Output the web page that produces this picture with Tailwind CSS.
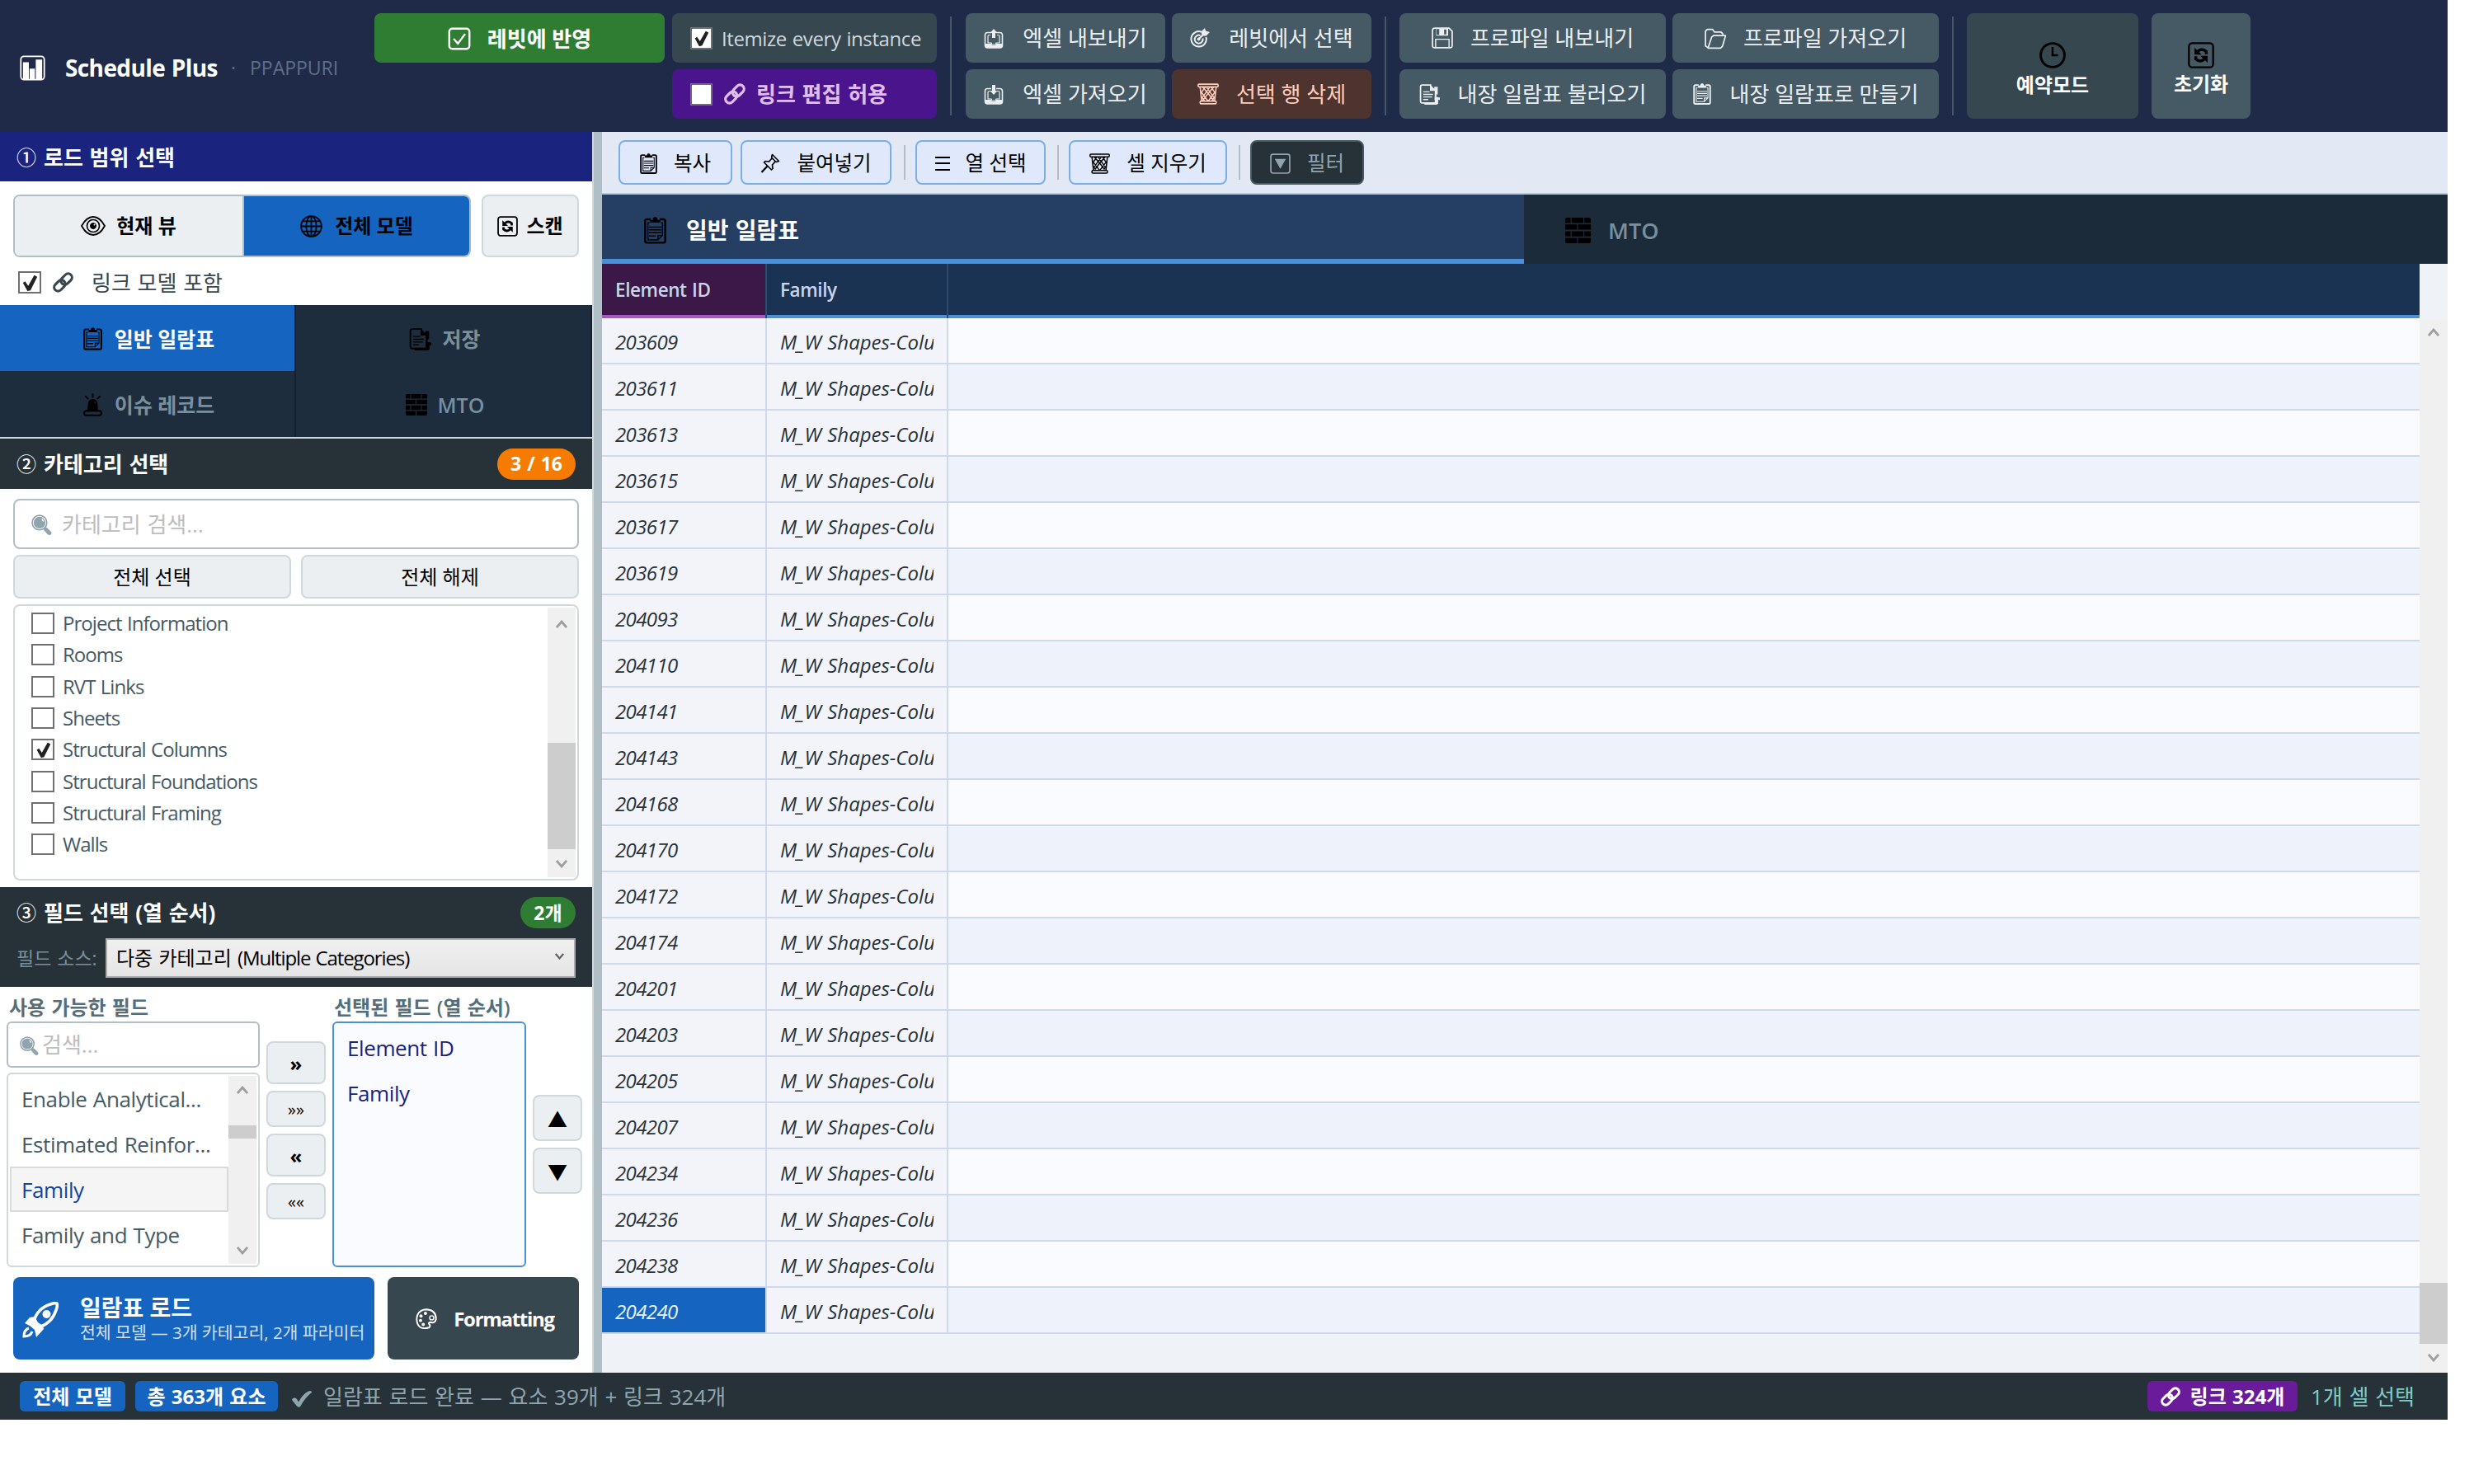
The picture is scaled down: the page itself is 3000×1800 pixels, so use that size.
<!DOCTYPE html>
<html lang="ko">
<head>
  <meta charset="UTF-8" />
  <meta name="viewport" content="width=device-width, initial-scale=1.0" />
  <title>Schedule Plus</title>
  <script src="https://cdn.jsdelivr.net/npm/@tailwindcss/browser@4"></script>
</head>
<body class="bg-white font-['Open_Sans','Noto_Sans_CJK_KR',sans-serif] text-[26px] leading-none [word-spacing:1px] text-black whitespace-nowrap">

  <!-- Icons -->
  <svg class="hidden">
    <symbol id="i-chart" viewBox="0 0 24 24"><rect x="1" y="1" width="22" height="22" rx="3" fill="none" stroke="currentColor" stroke-width="1.4"/><path fill="currentColor" d="M3 6.500h5.500V23H3zM9.200 12.500h5V23h-5zM15 4h6v19h-6z"/></symbol>
    <symbol id="i-done" viewBox="0 0 24 24" fill="none" stroke="currentColor" stroke-width="2"><rect x="1.500" y="1.500" width="21" height="21" rx="3"/><path d="M6 12l4.500 5L18 7"/></symbol>
    <symbol id="i-outbox" viewBox="0 0 24 24"><path fill="none" stroke="currentColor" stroke-width="1.600" d="M9 4.500H4.500Q1.500 4.500 1.500 7.500V20q0 3 3 3h15q3 0 3-3V7.500q0-3-3-3H15"/><path fill="none" stroke="currentColor" stroke-width="1.200" d="M8 7.500H6.500Q5 7.500 5 9v8h4l1 2h4l1-2h4V9q0-1.500-1.500-1.500H16"/><path fill="currentColor" d="M2 18h7l1 2h4l1-2h7v5H2zM12 0l4.500 5H14v6h-4V5H7.500z"/></symbol>
    <symbol id="i-inbox" viewBox="0 0 24 24"><path fill="none" stroke="currentColor" stroke-width="1.600" d="M9 4.500H4.500Q1.500 4.500 1.500 7.500V20q0 3 3 3h15q3 0 3-3V7.500q0-3-3-3H15"/><path fill="none" stroke="currentColor" stroke-width="1.200" d="M8 7.500H6.500Q5 7.500 5 9v8h4l1 2h4l1-2h4V9q0-1.500-1.500-1.500H16"/><path fill="currentColor" d="M2 18h7l1 2h4l1-2h7v5H2zM12 12l4.500-5H14V0h-4v7H7.500z"/></symbol>
    <symbol id="i-target" viewBox="0 0 24 24" fill="none" stroke="currentColor"><path stroke-width="2" d="M14 4.800A9.200 9.200 0 1 0 19.500 11"/><path stroke-width="2" d="M12.500 9A5 5 0 1 0 15.500 12.500"/><circle cx="10.500" cy="13.500" r="1.500" fill="currentColor"/><path stroke-width="2.200" d="M10.500 13.500L18 6"/><path fill="currentColor" stroke="none" d="M14 7V4l4-4 1 3.500L24 5l-4.500 4.500h-4z"/></symbol>
    <symbol id="i-trash" viewBox="0 0 24 24" fill="none" stroke="currentColor"><rect x=".8" y="1" width="22.400" height="3" rx="1" stroke-width="1.500"/><path stroke-width="1.500" d="M3 4l1.800 16M21 4l-1.800 16"/><rect x="3" y="20" width="18" height="3" rx="1" stroke-width="1.500"/><path stroke-width="1.400" d="M5.500 4l7 8 6 8M10 4l8.500 12M15 4l5 7M4 9.500L12 20M4.500 15l3.500 5M18.500 4l-7 8-6 8M14 4L5.500 16M9 4l-5 7M20 9.500L12 20M19.500 15L16 20"/></symbol>
    <symbol id="i-save" viewBox="0 0 24 24"><path fill="none" stroke="currentColor" stroke-width="1.600" d="M3.500 1h16L23 4.500v16q0 2.500-2.500 2.500h-17Q1 23 1 20.500v-17Q1 1 3.500 1z"/><path fill="none" stroke="currentColor" stroke-width="1.300" d="M4.500 23V13.500h15V23"/><path fill="currentColor" fill-rule="evenodd" d="M5 1h13.500v8.500H5zM14 2.500v5.500h2.500V2.500zM5.500 2v6.500h3V2z"/></symbol>
    <symbol id="i-folder" viewBox="0 0 24 24" fill="none" stroke="currentColor" stroke-width="1.600" stroke-linejoin="round"><path d="M4 22L1 20V3.500L3 1.500h6l2 3h7.500l2 2V8"/><path d="M4 22L8 10l2-1.500h13.500L20 20.500 18 22.500H4z"/></symbol>
    <symbol id="i-doc" viewBox="0 0 24 24"><path fill="none" stroke="currentColor" stroke-width="1.700" d="M14 1H3.500Q1.500 1 1.500 3V20q0 2 2 2h15"/><path fill="currentColor" d="M12.500 0l5 5.500V3h4v9h-1.500v3H22v8l-2 1H6v-2.500h12V8h-5.500z"/><path stroke="currentColor" stroke-width="1.300" d="M4.500 9H12M4.500 12H16M4.500 15H15M4.500 18h6"/><path stroke="currentColor" stroke-width="2.800" d="M18 17h6"/></symbol>
    <symbol id="i-clip" viewBox="0 0 20 24"><path fill="none" stroke="currentColor" stroke-width="1.800" d="M6 2H2.500Q1 2 1 3.500v18Q1 23 2.500 23h15q1.500 0 1.500-1.500v-18Q19 2 17.500 2H14"/><path fill="none" stroke="currentColor" stroke-width="1" d="M5 5H3.500v15.500h9l4-4V5H15M12.500 20.500v-4h4"/><path fill="currentColor" d="M5.500 5V2.500h2.300Q8 0 10 0t2.200 2.500h2.300V5z"/><path stroke="currentColor" stroke-width="1.100" d="M4.500 9h11M4.500 11.500h11M4.500 14h11M4.500 17h6"/></symbol>
    <symbol id="i-clock" viewBox="0 0 24 24" fill="none" stroke="currentColor"><circle cx="12" cy="12" r="10.800" stroke-width="2.200"/><path stroke-width="1.800" d="M12 4.500V13M11 12h6"/></symbol>
    <symbol id="i-sync" viewBox="0 0 24 24"><rect x="1" y="1" width="22" height="22" rx="3" fill="none" stroke="currentColor" stroke-width="1.700"/><path fill="none" stroke="currentColor" stroke-width="2.600" d="M9 8.500Q12.500 5 16.800 8.500V11M15 15.500Q11.500 19 7.200 15.500V13"/><path fill="currentColor" d="M6 5v6.500h6.500zM18 19v-6.500h-6.500z"/></symbol>
    <symbol id="i-eye" viewBox="0 0 30 24" fill="none" stroke="currentColor"><path stroke-width="1.800" d="M1 12Q7 1 15 1t14 11q-6 11-14 11T1 12z"/><circle cx="15" cy="12" r="7.500" stroke-width="1.700"/><circle cx="15" cy="12" r="3.500" fill="currentColor"/><circle cx="16.500" cy="10.500" r="1" fill="#eceff1" stroke="none"/></symbol>
    <symbol id="i-globe" viewBox="0 0 24 24" fill="none" stroke="currentColor" stroke-width="1.600"><circle cx="12" cy="12" r="11"/><ellipse cx="12" cy="12" rx="5.500" ry="11"/><path d="M12 1v22M1 12h22M3 6.500h18M3 17.500h18"/></symbol>
    <symbol id="i-link" viewBox="0 0 24 24" fill="none" stroke="currentColor" stroke-width="3"><rect x="8.700" y="3.800" width="14.500" height="9" rx="4.500" transform="rotate(-45 15.900 8.300)"/><rect x=".8" y="11.200" width="14.500" height="9" rx="4.500" transform="rotate(-45 8.100 15.700)"/></symbol>
    <symbol id="i-siren" viewBox="0 0 20 24"><path fill="currentColor" d="M4.500 17L5 11q.5-5 5-5t5 5l.5 6 3 1.500h-17z"/><rect x="1" y="18.500" width="18" height="4.600" rx="2" fill="none" stroke="currentColor" stroke-width="1.700"/><path stroke="currentColor" stroke-width="1.600" d="M10 0v4.500M2 2.500l3.500 3.500M18 2.500L14.500 6"/><path stroke="#1e2d3e" stroke-width="1" d="M12 8.500l1 2"/></symbol>
    <symbol id="i-brick" viewBox="0 0 24 24" fill="currentColor"><path d="M0 2q0-2 2-2h3v5H0zM6 0h11v5H6zM18 0h4q2 0 2 2v3h-6zM0 6.300h11v5H0zM12 6.300h12v5H12zM0 12.700h5v5H0zM6 12.700h11v5H6zM18 12.700h6v5h-6zM0 19h11v5H2q-2 0-2-2zM12 19h12v3q0 2-2 2H12z"/></symbol>
    <symbol id="i-search" viewBox="0 0 24 24"><circle cx="9.500" cy="9.500" r="8.500" fill="none" stroke="currentColor" stroke-width="1.600"/><circle cx="9.500" cy="9.500" r="6.800" fill="currentColor"/><path stroke="#fff" stroke-width="1.400" d="M12.500 5l1.500 3"/><path stroke="currentColor" stroke-width="4.800" stroke-linecap="round" d="M17 17.500l4 4"/></symbol>
    <symbol id="i-rocket" viewBox="0 0 44 44"><path fill="none" stroke="currentColor" stroke-width="3.600" stroke-linejoin="round" d="M14 24Q18 8 34 3q5-2 8-1 1 3-1 8-5 16-21 21z"/><circle cx="29.500" cy="15" r="5" fill="currentColor"/><path fill="currentColor" d="M15 18l4 7 6 4 1 4-9 10-2-9-6-5-6-3 6-7z"/><path fill="none" stroke="currentColor" stroke-width="3" d="M8 32q-6 2-6 10 8 0 10-6"/></symbol>
    <symbol id="i-palette" viewBox="0 0 24 24"><path fill="none" stroke="currentColor" stroke-width="1.800" d="M15 21.500Q2 25 1.200 12.500 1.500 1.500 12.500 1.200 23 2 22.800 12q-.8 5-6.500 3.500-3 .5-.5 3 .8 1.500-.8 3z"/><g fill="currentColor"><circle cx="11" cy="5.500" r="1.800"/><circle cx="6" cy="8.500" r="1.800"/><circle cx="5.500" cy="13.500" r="1.800"/><circle cx="8.500" cy="18" r="1.800"/></g><circle cx="18" cy="10.500" r="2.300" fill="none" stroke="currentColor" stroke-width="1.300"/></symbol>
    <symbol id="i-heavy" viewBox="0 0 24 20"><path fill="currentColor" d="M0 11q0-2 2.500-2.500T6 10l2 3.500Q13 4 20 .5q4-1.500 4 1.500Q16 8 10.500 18.500q-2 2.500-4.500 0Q3 15 0 11z"/></symbol>
    <symbol id="i-pin" viewBox="0 0 24 24" fill="none" stroke="currentColor" stroke-width="1.700" stroke-linejoin="round"><path d="M14.500 1.500l8 8-2.500.8-2-.3-3.500 4 .5 4.500-1.500 1.500L4.500 11 6 9.500l4.500.5 3.500-4-.3-2zM14.500 6l4 4"/><path stroke-width="2.200" d="M9 15l-7.500 8"/></symbol>
    <symbol id="i-lines" viewBox="0 0 18 24" stroke="currentColor" stroke-width="2"><path d="M0 5h18M0 12h18M0 20h18"/></symbol>
    <symbol id="i-filter" viewBox="0 0 24 24"><rect x="1" y="1" width="22" height="22" rx="2.500" fill="none" stroke="currentColor" stroke-width="1.600"/><path fill="currentColor" d="M5.500 6.500h13L12 18z"/></symbol>
    <symbol id="i-up" viewBox="0 0 14 10" fill="none" stroke="currentColor" stroke-width="2.800"><path d="M1 9l6-7 6 7"/></symbol>
    <symbol id="i-down" viewBox="0 0 14 10" fill="none" stroke="currentColor" stroke-width="2.800"><path d="M1 1l6 7 6-7"/></symbol>
    <symbol id="i-tick" viewBox="0 0 24 24"><path fill="#212121" d="M3 12l3-2 4 6L18 2l4 2-9 18-4 1z"/></symbol>
  </svg>

  <div class="flex h-[1722px] w-[2968px] flex-col">

    <!-- Header -->
    <header class="flex h-[160px] items-start bg-[#1f2a48] pt-4 text-[#eceff1]">
      <div class="flex h-[132px] w-[454px] items-center pl-6 text-white">
        <svg class="size-[31px]"><use href="#i-chart"/></svg>
        <span class="ml-6 text-[28px] font-bold tracking-[-0.6px]">Schedule Plus</span>
        <span class="ml-4 text-[23px] text-[#5f6f88]">·</span>
        <span class="ml-[17px] text-[23px] text-[#5f6f88]">PPAPPURI</span>
      </div>
      <button class="flex h-[60px] w-[352px] items-center justify-center gap-5 rounded-lg bg-[#2e7d32] pt-0.5 font-bold text-white">
        <svg class="size-7"><use href="#i-done"/></svg>레빗에 반영
      </button>
      <div class="ml-[9px] flex w-[321px] flex-col gap-2">
        <label class="flex h-[60px] items-center rounded-lg bg-[#37474f] pl-[22px]">
          <span class="flex size-[27px] items-center justify-center border-2 border-[#707070] bg-white"><svg class="size-[21px]"><use href="#i-tick"/></svg></span>
          <span class="ml-[11px] pt-0.5 text-[24px] tracking-[-0.4px] text-[#cfd8dc]">Itemize every instance</span>
        </label>
        <label class="flex h-[60px] items-center rounded-lg bg-[#4a148c] pl-[22px] font-bold text-[#e1bee7]">
          <span class="size-[27px] border-2 border-[#707070] bg-white"></span>
          <svg class="ml-[14px] size-[26px]"><use href="#i-link"/></svg>
          <span class="ml-[13px]">링크 편집 허용</span>
        </label>
      </div>
      <div class="mt-1 ml-4 h-[120px] w-0.5 bg-[#455a64]"></div>
      <div class="ml-[17px] grid grid-cols-[242px_242px] gap-2">
        <button class="flex h-[60px] items-center justify-center gap-[23px] rounded-lg bg-[#455a64]"><svg class="mt-0.5 size-6"><use href="#i-outbox"/></svg>엑셀 내보내기</button>
        <button class="flex h-[60px] items-center justify-center gap-[23px] rounded-lg bg-[#455a64]"><svg class="size-6"><use href="#i-target"/></svg>레빗에서 선택</button>
        <button class="flex h-[60px] items-center justify-center gap-[23px] rounded-lg bg-[#455a64]"><svg class="mt-0.5 size-6"><use href="#i-inbox"/></svg>엑셀 가져오기</button>
        <button class="flex h-[60px] items-center justify-center gap-[21px] rounded-lg bg-[#4e342e] text-[#ffccbc]"><svg class="size-[26px]"><use href="#i-trash"/></svg>선택 행 삭제</button>
      </div>
      <div class="mt-1 ml-4 h-[120px] w-0.5 bg-[#455a64]"></div>
      <div class="ml-4 grid grid-cols-[323px_323px] gap-2">
        <button class="flex h-[60px] items-center justify-center gap-[21px] rounded-lg bg-[#455a64]"><svg class="size-[26px]"><use href="#i-save"/></svg>프로파일 내보내기</button>
        <button class="flex h-[60px] items-center justify-center gap-[21px] rounded-lg bg-[#455a64]"><svg class="mt-0.5 size-[26px]"><use href="#i-folder"/></svg>프로파일 가져오기</button>
        <button class="flex h-[60px] items-center justify-center gap-[22px] rounded-lg bg-[#455a64]"><svg class="size-[25px]"><use href="#i-doc"/></svg>내장 일람표 불러오기</button>
        <button class="flex h-[60px] items-center justify-center gap-[23px] rounded-lg bg-[#455a64]"><svg class="h-[26px] w-[22px]"><use href="#i-clip"/></svg>내장 일람표로 만들기</button>
      </div>
      <div class="mt-1 ml-4 h-[120px] w-0.5 bg-[#455a64]"></div>
      <button class="ml-4 flex h-[128px] w-[208px] flex-col items-center rounded-lg bg-[#37474f] pt-[35px] text-[24px] font-bold text-white">
        <svg class="size-8 text-black"><use href="#i-clock"/></svg><span class="mt-2">예약모드</span>
      </button>
      <button class="ml-4 flex h-[128px] w-[120px] flex-col items-center rounded-lg bg-[#455a64] pt-[35px] text-[24px] font-semibold text-white">
        <svg class="size-8 text-black"><use href="#i-sync"/></svg><span class="mt-[7px]">초기화</span>
      </button>
    </header>

    <main class="flex h-[1505px]">
      <!-- Sidebar -->
      <aside class="flex w-[718px] flex-col">
        <div class="flex h-[60px] items-center gap-[9px] bg-[#1a237e] pt-0.5 pl-5 font-bold text-white"><span class="text-[24px] font-medium">①</span>로드 범위 선택</div>
        <div class="h-[150px] pt-4">
          <div class="flex pl-4 text-[24px] font-bold">
            <div class="flex h-[76px] w-[555px] overflow-hidden rounded-lg border-2 border-[#b0bec5]">
              <button class="flex w-[278px] items-center justify-center gap-[13px] border-r-2 border-[#b0bec5] bg-[#eceff1]"><svg class="h-6 w-[30px]"><use href="#i-eye"/></svg>현재 뷰</button>
              <button class="flex flex-1 items-center justify-center gap-[15px] bg-[#1565c0]"><svg class="size-[27px]"><use href="#i-globe"/></svg>전체 모델</button>
            </div>
            <button class="ml-[13px] flex h-[76px] w-[118px] items-center justify-center gap-2.5 rounded-lg border-2 border-[#cfd8dc] bg-[#eceff1]"><svg class="size-[25px]"><use href="#i-sync"/></svg>스캔</button>
          </div>
          <label class="mt-[17px] flex items-center pl-[22px] text-[#37474f]">
            <span class="flex h-[27px] w-[28px] items-center justify-center border-2 border-[#707070]"><svg class="size-[22px]"><use href="#i-tick"/></svg></span>
            <svg class="ml-3.5 size-[25px]"><use href="#i-link"/></svg>
            <span class="ml-[22px]">링크 모델 포함</span>
          </label>
        </div>
        <div class="grid h-[160px] grid-cols-2 grid-rows-2 bg-[#1e2d3e] text-[25px] font-semibold text-[#78909c]">
          <button class="flex items-center justify-center gap-[15px] border-r-2 border-[#14202e] bg-[#1565c0] pt-0.5 pl-1 text-white"><svg class="h-7 w-[23px] text-black"><use href="#i-clip"/></svg>일반 일람표</button>
          <button class="flex items-center justify-center gap-[13px] border-r-2 border-[#14202e] pt-0.5 pl-1"><svg class="size-[27px] text-black"><use href="#i-doc"/></svg>저장</button>
          <button class="flex items-center justify-center gap-[15px] border-r-2 border-[#14202e] pt-0.5 pl-1"><svg class="h-7 w-[23px] text-black"><use href="#i-siren"/></svg>이슈 레코드</button>
          <button class="flex items-center justify-center gap-[13px] border-r-2 border-[#14202e] pt-0.5 pl-1"><svg class="size-[26px] text-black"><use href="#i-brick"/></svg>MTO</button>
        </div>

        <!-- Categories -->
        <div class="flex h-[63px] items-center gap-[9px] border-t-2 border-[#cfd8dc] bg-[#263238] pr-5 pl-5 font-bold text-white">
          <span class="text-[24px] font-medium">②</span>카테고리 선택
          <span class="ml-auto flex h-[38px] w-[95px] items-center justify-center rounded-full bg-[#f57c00] text-[23px]">3 / 16</span>
        </div>
        <div class="flex h-[483px] flex-col px-4 pt-3">
          <div class="flex h-[61px] items-center gap-3 rounded-lg border-2 border-[#b0bec5] pl-5 text-[#bdbdbd]"><svg class="mt-0.5 size-[25px] text-[#90a4ae]"><use href="#i-search"/></svg>카테고리 검색...</div>
          <div class="mt-[7px] grid grid-cols-2 gap-3 text-[24px]">
            <button class="h-[53px] rounded-lg border-2 border-[#cfd8dc] bg-[#eceff1]">전체 선택</button>
            <button class="h-[53px] rounded-lg border-2 border-[#cfd8dc] bg-[#eceff1]">전체 해제</button>
          </div>
          <div class="mt-[7px] flex h-[335px] justify-between rounded-lg border-2 border-[#cfd8dc] py-0.5 pr-0.5 pl-5">
            <div id="categories" class="flex flex-col text-[24px] tracking-[-0.95px] text-[#455a64]"></div>
            <div class="flex w-[34px] flex-col items-center bg-[#f0f0f0] pt-[15px] text-[#9e9e9e]">
              <svg class="h-[10px] w-3.5"><use href="#i-up"/></svg>
              <div class="mt-[139px] h-[129px] w-full bg-[#cdcdcd]"></div>
              <svg class="mt-[13px] h-[10px] w-3.5"><use href="#i-down"/></svg>
            </div>
          </div>
        </div>

        <!-- Fields -->
        <div class="h-[121px] bg-[#263238] pt-[12px] pr-5 pl-5 text-white">
          <div class="flex h-[38px] items-center gap-[9px] font-bold">
            <span class="text-[24px] font-medium">③</span>필드 선택 (열 순서)
            <span class="ml-auto flex h-[38px] w-[67px] items-center justify-center rounded-full bg-[#2e7d32] text-[23px]">2개</span>
          </div>
          <div class="mt-3 flex items-center text-[24px]">
            <span class="w-[108px] text-[23px] text-[#78909c]">필드 소스:</span>
            <div class="flex h-12 flex-1 items-center justify-between border-2 border-[#acacac] bg-linear-to-b from-[#f0f0f0] to-[#e5e5e5] pr-3 pl-[11px] text-black">
              <span>다중 카테고리 <span class="tracking-[-1.1px]">(Multiple Categories)</span></span>
              <svg class="mb-1 h-2 w-[11px] text-[#606060]"><use href="#i-down"/></svg>
            </div>
          </div>
        </div>
        <div class="flex h-[343px] pt-[13px] pl-2">
          <div class="flex w-[307px] flex-col">
            <span class="h-[29px] pl-[3px] text-[24px] font-semibold text-[#546e7a]">사용 가능한 필드</span>
            <div class="flex h-14 items-center gap-1 rounded-md border-2 border-[#b0bec5] pl-3.5 text-[#bdbdbd]"><svg class="mt-0.5 size-[23px] text-[#90a4ae]"><use href="#i-search"/></svg>검색...</div>
            <div class="mt-1.5 flex h-[236px] rounded-md border-2 border-[#cfd8dc] p-0.5 text-[26px] tracking-[-0.4px] text-[#455a64]">
              <div class="flex w-[265px] flex-col">
                <div class="flex h-[55px] items-center pt-px pl-3.5">Enable Analytical...</div>
                <div class="flex h-[55px] items-center pl-3.5">Estimated Reinfor...</div>
                <div class="flex h-[55px] items-center border-2 border-[#dadada] bg-[#f5f5f5] pl-3 text-[#0d47a1]">Family</div>
                <div class="flex h-[55px] items-center pl-3.5">Family and Type</div>
              </div>
              <div class="flex flex-1 flex-col items-center bg-[#f0f0f0] pt-3 text-[#9e9e9e]">
                <svg class="h-[10px] w-3.5"><use href="#i-up"/></svg>
                <div class="mt-[38px] h-4 w-full bg-[#cdcdcd]"></div>
                <svg class="mt-[131px] h-[10px] w-3.5"><use href="#i-down"/></svg>
              </div>
            </div>
          </div>
          <div class="ml-2 flex w-[72px] flex-col gap-2 pt-[53px]">
            <button class="h-[52px] rounded-lg border-2 border-[#cfd8dc] bg-[#eceff1] pt-0.5 text-[24px] font-bold">»</button>
            <button class="h-[44px] rounded-lg border-2 border-[#cfd8dc] bg-[#eceff1] pt-0.5 text-[20px]">»»</button>
            <button class="h-[52px] rounded-lg border-2 border-[#cfd8dc] bg-[#eceff1] pt-0.5 text-[24px] font-bold">«</button>
            <button class="h-[44px] rounded-lg border-2 border-[#cfd8dc] bg-[#eceff1] pt-0.5 text-[20px]">««</button>
          </div>
          <div class="ml-2 flex w-[235px] flex-col">
            <span class="h-[29px] pl-0.5 text-[24px] font-semibold text-[#546e7a]">선택된 필드 (열 순서)</span>
            <div class="h-[298px] rounded-md border-2 border-[#4a90d9] bg-[#fafbff] pt-0.5 pl-4 tracking-[-0.4px] text-[#1a237e]">
              <div class="flex h-[55px] items-center">Element ID</div>
              <div class="flex h-[55px] items-center">Family</div>
            </div>
          </div>
          <div class="ml-2 flex w-[60px] flex-col gap-2 pt-[118px] text-[24px]">
            <button class="h-14 rounded-lg border-2 border-[#cfd8dc] bg-[#eceff1] pt-1">▲</button>
            <button class="h-14 rounded-lg border-2 border-[#cfd8dc] bg-[#eceff1] pt-1">▼</button>
          </div>
        </div>
        <div class="flex gap-4 px-4 pt-[9px] text-white">
          <button class="flex h-[100px] w-[438px] items-center rounded-lg bg-[#1565c0] pl-[11px] text-left">
            <svg class="mt-1 size-11"><use href="#i-rocket"/></svg>
            <span class="ml-[26px]">
              <span class="block text-[28px] font-bold">일람표 로드</span>
              <span class="mt-1.5 block text-[20.5px] text-[#d0e0f2]">전체 모델 — 3개 카테고리, 2개 파라미터</span>
            </span>
          </button>
          <button class="flex h-[100px] flex-1 items-center justify-center gap-5 rounded-lg bg-[#37474f] pt-0.5 pl-1 text-[24px] font-bold tracking-[-1.3px]"><svg class="size-[26px]"><use href="#i-palette"/></svg>Formatting</button>
        </div>
      </aside>
      <div class="w-3 border-l-2 border-[#cfd8dc] bg-[#b0bec5]"></div>

      <!-- Grid -->
      <section class="flex w-[2238px] flex-col bg-[#eff3f8]">
        <div class="flex h-[76px] items-center border-b-2 border-[#bcc8d8] bg-[#e3e9f4] pl-5 text-[24.5px]">
          <button class="flex h-[54px] w-[138px] items-center justify-center gap-5 rounded-lg border-2 border-[#7aaee8] bg-[#dfe9fb] pt-0.5"><svg class="h-[25px] w-[21px]"><use href="#i-clip"/></svg>복사</button>
          <button class="ml-[10px] flex h-[54px] w-[183px] items-center justify-center gap-5 rounded-lg border-2 border-[#7aaee8] bg-[#dfe9fb] pt-0.5"><svg class="size-6"><use href="#i-pin"/></svg>붙여넣기</button>
          <div class="ml-[15px] h-[42px] w-0.5 bg-[#b0bec5]"></div>
          <button class="ml-3 flex h-[54px] w-[158px] items-center justify-center gap-[19px] rounded-lg border-2 border-[#7aaee8] bg-[#dfe9fb] pt-0.5"><svg class="h-6 w-[18px]"><use href="#i-lines"/></svg>열 선택</button>
          <div class="ml-[14px] h-[42px] w-0.5 bg-[#b0bec5]"></div>
          <button class="ml-3 flex h-[54px] w-[192px] items-center justify-center gap-5 rounded-lg border-2 border-[#7aaee8] bg-[#dfe9fb] pt-0.5"><svg class="size-[25px]"><use href="#i-trash"/></svg>셀 지우기</button>
          <div class="ml-[14px] h-[42px] w-0.5 bg-[#b0bec5]"></div>
          <button class="ml-3 flex h-[54px] w-[138px] items-center justify-center gap-[20px] rounded-lg border-2 border-[#455a64] bg-[#263238] pt-0.5 text-[#90a4ae]"><svg class="size-[25px]"><use href="#i-filter"/></svg>필터</button>
        </div>
        <div class="flex h-[84px] bg-[#1b2b3a] font-bold">
          <div class="flex w-[1118px] items-center gap-6 border-b-6 border-[#4a90d9] bg-[#253f63] pt-2 pl-[51px] text-[28px] text-white"><svg class="h-[33px] w-[27px] text-black"><use href="#i-clip"/></svg>일반 일람표</div>
          <div class="flex items-center gap-[21px] pt-0.5 pl-[50px] text-[27px] font-semibold text-[#78909c]"><svg class="size-[31px] text-black"><use href="#i-brick"/></svg>MTO</div>
        </div>
        <div class="flex flex-1">
          <div class="w-[2204px]">
            <div class="flex h-[66px] text-[22.5px] font-semibold tracking-[-0.4px] text-[#c5d5ee]">
              <div class="flex w-[198px] items-center border-b-4 border-[#a855c8] bg-[#3c1848] pt-0.5 pl-4">Element ID</div>
              <div class="w-0.5 bg-[#2c4a72]"></div>
              <div class="flex w-[218px] items-center border-b-4 border-[#4a90d9] bg-[#1b3352] pt-0.5 pl-4">Family</div>
              <div class="w-0.5 bg-[#2c4a72]"></div>
              <div class="flex-1 border-b-4 border-[#4a90d9] bg-[#1b3352]"></div>
            </div>
            <div id="rows" class="text-[24px] text-[#263238] italic"></div>
          </div>
          <div class="flex w-[34px] flex-col items-center text-[#9e9e9e]">
            <div class="h-[66px]"></div>
            <div class="flex w-full flex-1 flex-col items-center bg-[#f0f0f0] pt-3">
              <svg class="h-[10px] w-3.5"><use href="#i-up"/></svg>
              <div class="mt-[1148px] h-[74px] w-full bg-[#cdcdcd]"></div>
              <svg class="mt-3 h-[10px] w-3.5"><use href="#i-down"/></svg>
            </div>
          </div>
        </div>
      </section>
    </main>

    <!-- Status bar -->
    <footer class="flex h-[57px] items-center bg-[#263238] px-6 text-[24px] text-white">
      <span class="flex h-[37px] w-[128px] items-center justify-center rounded-md bg-[#1565c0] font-semibold">전체 모델</span>
      <span class="ml-3 flex h-[37px] w-[173px] items-center justify-center rounded-md bg-[#1565c0] font-bold">총 363개 요소</span>
      <svg class="mt-1.5 ml-[17px] h-5 w-6 text-[#90a4ae]"><use href="#i-heavy"/></svg>
      <span class="ml-[14px] text-[26px] text-[#90a4ae]">일람표 로드 완료 — 요소 39개 + 링크 324개</span>
      <span class="ml-auto flex h-[37px] w-[182px] items-center justify-center gap-3 rounded-md bg-[#6a1b9a] font-bold"><svg class="size-6"><use href="#i-link"/></svg>링크 324개</span>
      <span class="mr-4 ml-4 text-[26px] text-[#80cbc4]">1개 셀 선택</span>
    </footer>
  </div>

  <script>
    const categories = [
      ['Project Information', false], ['Rooms', false], ['RVT Links', false], ['Sheets', false],
      ['Structural Columns', true], ['Structural Foundations', false], ['Structural Framing', false], ['Walls', false]
    ];
    document.getElementById('categories').innerHTML = categories.map(([name, on]) => `
      <label class="flex h-[38.3px] items-center gap-2.5">
        <span class="flex h-[26px] w-[28px] items-center justify-center border-2 border-[#707070]">${on ? '<svg class="size-[21px]"><use href="#i-tick"/></svg>' : ''}</span>${name}
      </label>`).join('');

    const ids = [203609, 203611, 203613, 203615, 203617, 203619, 204093, 204110, 204141, 204143, 204168,
      204170, 204172, 204174, 204201, 204203, 204205, 204207, 204234, 204236, 204238, 204240];
    const selected = 204240;
    document.getElementById('rows').innerHTML = ids.map((id, i) => `
      <div class="flex h-14 border-b-2 border-[#cddaeb]">
        <div class="flex w-[200px] items-center border-r-2 border-[#cddaeb] pt-1 pl-4 tracking-[-0.6px] ${id === selected ? 'bg-[#1565c0] text-[#eaf2fd]' : 'bg-[#f3f4f9]'}">${id}</div>
        <div class="w-[220px] border-r-2 border-[#cddaeb] bg-[#f3f4f9] px-4"><div class="h-full overflow-hidden leading-[58px]">M_W Shapes-Colu</div></div>
        <div class="flex-1 ${i % 2 ? 'bg-[#edf2fb]' : 'bg-[#f9fbff]'}"></div>
      </div>`).join('');
  </script>
</body>
</html>
